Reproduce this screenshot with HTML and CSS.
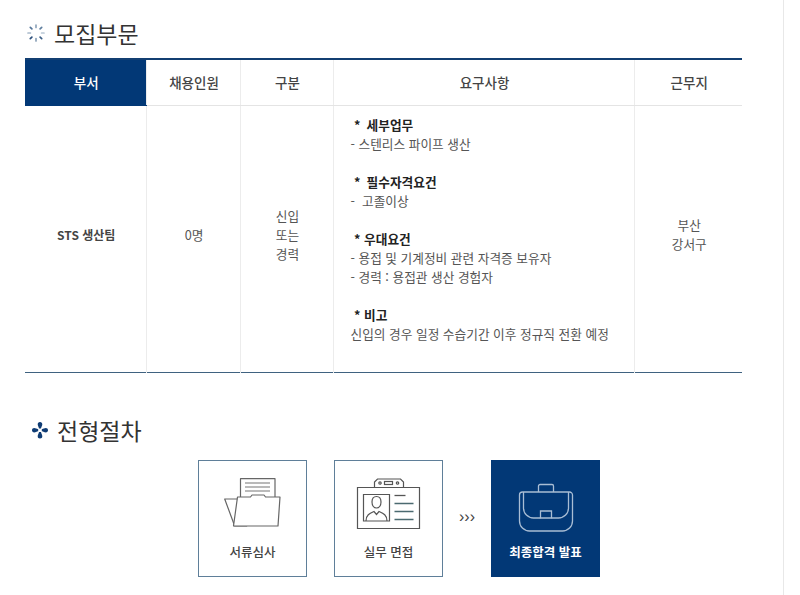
FILE: index.html
```html
<!DOCTYPE html>
<html lang="ko">
<head>
<meta charset="utf-8">
<title>모집부문</title>
<link rel="stylesheet" href="styles.css">
</head>
<body>
<div class="page">
  <main class="content">
    <h2 class="title title-first">
      <svg class="ico-spin" width="18" height="18" viewBox="0 0 18 18" aria-hidden="true">
        <g stroke-width="1.700" stroke-linecap="round" fill="none">
          <path d="M9 1v2.400" stroke="#8fa5bb"/>
          <path d="M14.700 3.300l-1.600 1.600" stroke="#5f7f9f"/>
          <path d="M17 9h-2.400" stroke="#b9c7d5"/>
          <path d="M14.700 14.700l-1.600-1.600" stroke="#3d5f86"/>
          <path d="M9 17v-2.400" stroke="#8ba1b8"/>
          <path d="M3.300 14.700l1.600-1.600" stroke="#2d507c"/>
          <path d="M1 9h2.400" stroke="#a9bacb"/>
          <path d="M3.300 3.300l1.600 1.600" stroke="#54759a"/>
        </g>
      </svg>
      <span>모집부문</span>
    </h2>
    <table class="jobs">
      <thead>
        <tr>
          <th class="c1 head-main">부서</th>
          <th class="c2">채용인원</th>
          <th class="c3">구분</th>
          <th class="c4">요구사항</th>
          <th class="c5">근무지</th>
        </tr>
      </thead>
      <tbody>
        <tr>
          <td class="dept">STS 생산팀</td>
          <td>0명</td>
          <td>신입<br>또는<br>경력</td>
          <td class="req">
            <b>&nbsp;* &#8201;세부업무</b><br>
            - 스텐리스 파이프 생산<br>
            <br>
            <b>&nbsp;* &#8201;필수자격요건</b><br>
            - &nbsp;고졸이상<br>
            <br>
            <b>&nbsp;* 우대요건</b><br>
            - 용접 및 기계정비 관련 자격증 보유자<br>
            - 경력 : 용접관 생산 경험자<br>
            <br>
            <b>&nbsp;* 비고</b><br>
            신입의 경우 일정 수습기간 이후 정규직 전환 예정
          </td>
          <td>부산<br>강서구</td>
        </tr>
      </tbody>
    </table>
    <h2 class="title title-second">
      <svg class="ico-plus" width="16" height="18" viewBox="0 0 16 18" aria-hidden="true">
        <g fill="#0f3c74">
          <path d="M8 1c1.500 0 2.300 1 2.300 2.300 0 1.400-.9 2.500-1.300 4.200H7C6.600 5.800 5.700 4.700 5.700 3.300 5.700 2 6.500 1 8 1z"/>
          <path d="M8 17.500c1.500 0 2.300-1 2.300-2.300 0-1.400-.9-2.500-1.300-4.200H7c-.4 1.700-1.300 2.800-1.300 4.200 0 1.300.8 2.300 2.300 2.300z"/>
          <path d="M0 9.200c0-1.400 1-2.200 2.200-2.200 1.400 0 2.300.8 4 1.200v2c-1.700.4-2.600 1.200-4 1.200C1 11.400 0 10.600 0 9.200z"/>
          <path d="M16 9.200c0-1.400-1-2.200-2.200-2.200-1.400 0-2.300.8-4 1.200v2c1.700.4 2.600 1.200 4 1.200 1.200 0 2.200-.8 2.200-2.200z"/>
        </g>
      </svg>
      <span>전형절차</span>
    </h2>
    <div class="steps">
      <div class="step">
        <svg class="step-ico" width="58" height="54" viewBox="0 0 58 54" aria-hidden="true">
          <g fill="#fff" stroke="#666" stroke-width="1.200" stroke-linejoin="round">
            <path d="M16.500 .7h34.500v30h-34.500z"/>
            <path d="M.7 21h13l9 27h-12z"/>
            <path d="M13.500 19h13l1.500-2h12l1.500 2h14.500l-2 29H9.500z"/>
          </g>
          <g stroke="#777" stroke-width="1.200" fill="none">
            <path d="M21 5h25M21 9h25M21 13h25"/>
          </g>
        </svg>
        <span class="step-label">서류심사</span>
      </div>
      <div class="step step-mid">
        <svg class="step-ico" width="66" height="54" viewBox="0 0 66 54" aria-hidden="true">
          <g fill="none" stroke="#555" stroke-width="1.200">
            <path d="M1.500 9.500h62v41h-62z"/>
            <path d="M18.500 9.500v-5.500l3-3h23l3 3v5.500"/>
            <rect x="28.500" y="3.500" width="8" height="3"/>
            <circle cx="24" cy="5" r="1.200"/>
            <circle cx="41.500" cy="5" r="1.200"/>
            <path d="M7.500 16.500h26v26.500h-26z"/>
            <path d="M16 24c0-3.500 2-5.500 4.500-5.500s4.500 2 4.500 5.500-2 6-4.500 6-4.500-2.500-4.500-6z"/>
            <path d="M10 43c0-6 3.500-7.500 8-9.500l2.500 3 2.500-3c4.500 2 8 3.500 8 9.500"/>
          </g>
          <g fill="none" stroke="#555" stroke-width="1.300">
            <path d="M38.500 17.500h11"/>
          </g>
          <g fill="none" stroke="#4b6a70" stroke-width="1.300">
            <path d="M38.500 25.500h19M38.500 33.500h19M38.500 41.500h19"/>
          </g>
        </svg>
        <span class="step-label">실무 면접</span>
      </div>
      <span class="arrows">›››</span>
      <div class="step step-final">
        <svg class="step-ico" width="56" height="54" viewBox="0 0 56 54" aria-hidden="true">
          <g fill="none" stroke="#a9bdd4" stroke-width="1.300">
            <path d="M20.500 14V8a1.500 1.500 0 0 1 1.500-1.500h12a1.500 1.500 0 0 1 1.500 1.500v6"/>
            <path d="M4.500 14h47a3 3 0 0 1 3 3v26a10 10 0 0 1-10 10h-33a10 10 0 0 1-10-10V17a3 3 0 0 1 3-3z"/>
            <path d="M5.500 14v16a10 10 0 0 0 10 10h7M50.500 14v16a10 10 0 0 1-10 10h-7"/>
            <path d="M22.500 33h11v7h-11z"/>
          </g>
        </svg>
        <span class="step-label">최종합격 발표</span>
      </div>
    </div>
  </main>
</div>
</body>
</html>
```

FILE: styles.css
```css
html, body {
  margin: 0;
  padding: 0;
  background: #fff;
}
body {
  font-family: "Noto Sans CJK KR", "Noto Sans", sans-serif;
  color: #555;
  overflow: hidden;
}
.page {
  width: 784px;
  height: 595px;
  box-sizing: border-box;
  border-right: 1px solid #e8e8e8;
  overflow: hidden;
}
.content {
  padding: 0 41px 0 25px;
}
.title {
  display: flex;
  align-items: center;
  margin: 0;
  font-size: 23px;
  font-weight: 400;
  line-height: 32px;
  color: #333;
}
.title-first {
  padding: 17px 0 9px 2px;
  gap: 9px;
}
.title-second {
  margin-top: 41px;
  padding-left: 7px;
  gap: 9px;
}
.jobs {
  width: 717px;
  table-layout: fixed;
  border-collapse: collapse;
  border-top: 2px solid #133f72;
  border-bottom: 1px solid #3f6280;
  font-size: 12.700px;
  line-height: 19px;
  color: #555;
}
.c1 { width: 121px; }
.c2 { width: 94px; }
.c3 { width: 93px; }
.c4 { width: 301px; }
.c5 { width: 108px; }
.jobs th {
  box-sizing: border-box;
  height: 46px;
  padding: 0 0 0 2px;
  font-weight: 500;
  font-size: 13.500px;
  color: #444;
  border-bottom: 1px solid #e4e4e4;
  border-left: 1px solid #ececec;
}
.jobs th.head-main {
  background: #023876;
  color: #fff;
  border-left: 0;
  border-bottom-color: #023876;
}
.jobs td {
  padding: 0 0 9px 2px;
  text-align: center;
  vertical-align: middle;
  border-left: 1px solid #ececec;
}
.jobs td:first-child {
  border-left: 0;
}
.jobs td.dept {
  font-size: 12px;
  font-weight: 700;
  color: #444;
}
.jobs td.req {
  padding: 9px 0 29px 17px;
  text-align: left;
}
.req b {
  font-weight: 700;
  color: #222;
}
.steps {
  display: flex;
  align-items: center;
  margin: 14px 0 0 173px;
}
.step {
  display: flex;
  flex-direction: column;
  align-items: center;
  box-sizing: border-box;
  width: 109px;
  height: 117px;
  border: 1px solid #5f7f99;
  margin-right: 27px;
}
.step-ico {
  display: block;
  margin-top: 17px;
}
.step-label {
  margin-top: 11px;
  font-size: 12.500px;
  line-height: 18px;
  font-weight: 500;
  color: #444;
}
.step-mid {
  margin-right: 0;
}
.arrows {
  box-sizing: border-box;
  width: 48px;
  padding: 0 0 2px 16px;
  font-family: "Liberation Sans", sans-serif;
  font-size: 16px;
  color: #444;
}
.step-final {
  margin-right: 0;
  background: #023876;
  border-color: #023876;
}
.step-final .step-label {
  color: #fff;
  font-weight: 700;
}
```
